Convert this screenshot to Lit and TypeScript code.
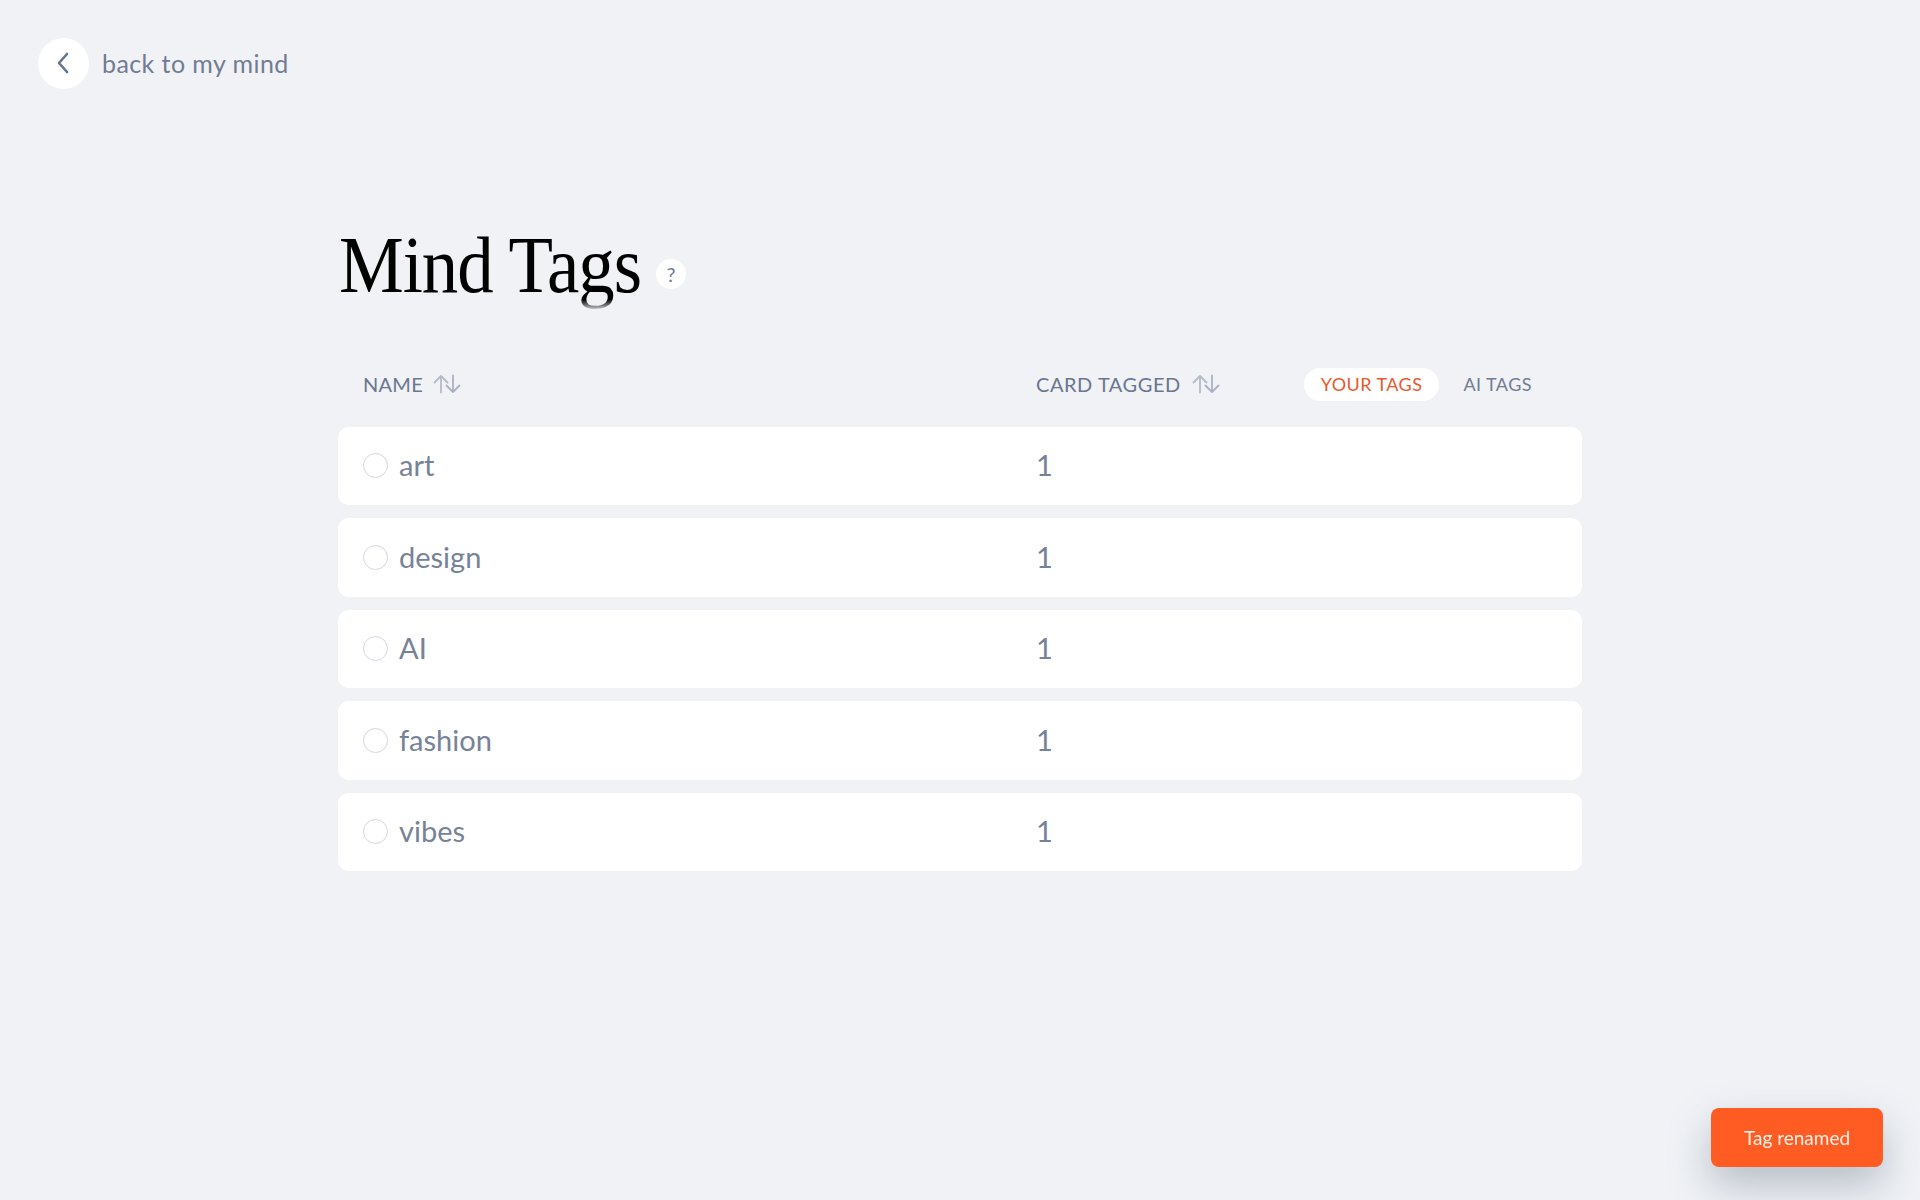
import { LitElement, html, css, svg } from "lit";
import { customElement } from "lit/decorators.js";

const sortIcon = html`<svg class="sort" viewBox="0 0 28 20" fill="none" stroke-width="1.8" stroke-linecap="round" stroke-linejoin="round">
  ${svg`<path d="M8 18.5V2M1.5 8.5 8 2l6.5 6.5" stroke="#b3bac8"/><path d="M20 1.5V18M13.5 11.5 20 18l6.5-6.5" stroke="#a9b1c1"/>`}
</svg>`;

@customElement("app-root")
export class AppRoot extends LitElement {
  static styles = css`
    :host { display: block; min-height: 1200px; background: #f0f2f6; font-family: Lato, "Open Sans", sans-serif; color: #707c94; box-sizing: border-box; padding: 38px 38px 0; }
    .back { display: flex; align-items: center; gap: 13px; font-size: 25px; height: 51px; letter-spacing: 0.42px; }
    .back .label { margin-top: -2px; }
    .circle { width: 51px; height: 51px; border-radius: 50%; background: #fff; display: grid; place-items: center; }
    .circle svg { width: 14px; height: 22px; margin-top: -2px; margin-left: -2px; }
    main { width: 1244px; margin: 134px auto 0; }
    .title { display: flex; align-items: flex-start; gap: 15px; height: 119px; }
    h1 { margin: 0 -30px 0 0; font-family: "Liberation Serif", serif; font-weight: 400; font-size: 80px; line-height: 84px; letter-spacing: -1.1px; padding: 0 0 6px 1px; transform: scaleX(0.91); transform-origin: left;
      background: linear-gradient(#000 85%, rgba(0,0,0,0.08) 97%); -webkit-background-clip: text; background-clip: text; color: transparent; }
    .help { width: 30px; height: 30px; border-radius: 50%; background: #fff; display: grid; place-items: center; margin-top: 36px; font-size: 20px; color: #6d7a93; }
    .head { display: grid; grid-template-columns: 673px 1fr auto; align-items: center; height: 84.5px; padding: 0 50px 0 25px; }
    .h { display: flex; align-items: center; gap: 10px; font-size: 20px; letter-spacing: 0.25px; color: #6b7690; }
    .h.wide { letter-spacing: 0.55px; gap: 11px; }
    .sort { width: 28px; height: 20px; }
    .tabs { display: flex; align-items: center; gap: 24px; font-size: 18px; letter-spacing: 0.45px; }
    .tab { height: 33px; display: flex; align-items: center; }
    .tab.on { background: #fff; border-radius: 17px; padding: 0 17px; color: #e8592d; }
    .rows { display: grid; grid-auto-rows: 78.5px; gap: 13px; }
    .row { background: #fff; border-radius: 11px; display: grid; grid-template-columns: 673px 1fr; align-items: center; padding-left: 25px; font-size: 29px; color: #778297; }
    .name { display: flex; align-items: center; gap: 11px; }
    .text { margin-top: -2px; }
    .radio { width: 25px; height: 25px; box-sizing: border-box; border-radius: 50%; border: 1.5px solid #d3d7e0; }
    .toast { position: fixed; right: 37px; bottom: 33px; width: 172px; height: 59px; border-radius: 8px; background: #ff5c24; color: #fff0e8; display: grid; place-items: center; font-size: 19px; box-shadow: 0 18px 40px rgba(90,105,120,0.38); }
  `;

  render() {
    const rows = ["art", "design", "AI", "fashion", "vibes"];
    return html`
      <div class="back">
        <span class="circle"><svg viewBox="0 0 14 22" fill="none" stroke="#667390" stroke-width="2.6" stroke-linecap="round" stroke-linejoin="round"><path d="M11 2 3 11l8 9"/></svg></span>
        <span class="label">back to my mind</span>
      </div>
      <main>
        <div class="title"><h1>Mind Tags</h1><span class="help">?</span></div>
        <div class="head">
          <div class="h">NAME ${sortIcon}</div>
          <div class="h wide">CARD TAGGED ${sortIcon}</div>
          <div class="tabs"><span class="tab on">YOUR TAGS</span><span class="tab">AI TAGS</span></div>
        </div>
        <div class="rows">
          ${rows.map((r) => html`<div class="row"><div class="name"><span class="radio"></span><span class="text">${r}</span></div><div class="text">1</div></div>`)}
        </div>
      </main>
      <div class="toast">Tag renamed</div>
    `;
  }
}
